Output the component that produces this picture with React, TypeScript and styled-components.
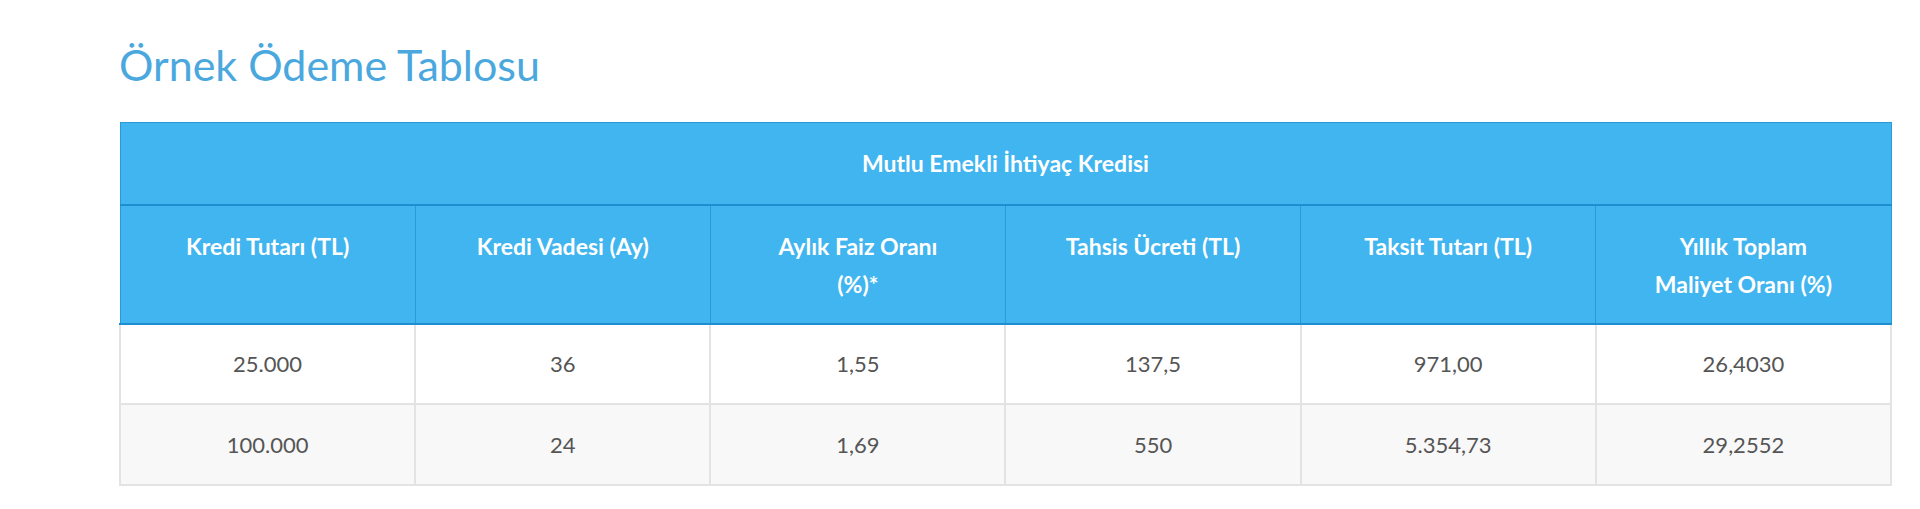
import React from "react";
import styled, { createGlobalStyle } from "styled-components";

const GlobalStyle = createGlobalStyle`
    html, body {
        margin: 0;
        padding: 0;
        background: #ffffff;
    }
`;

const Page = styled.div`
    padding: 40px 28px 0 119px;
    font-family: Lato, "Open Sans", sans-serif;
`;

const Title = styled.h2`
    margin: 0 0 32px 0;
    font-size: 43px;
    font-weight: 400;
    line-height: 50px;
    color: #4aa8de;
`;

const Table = styled.table`
    width: 100%;
    border-collapse: collapse;
    table-layout: fixed;
`;

const HeadCell = styled.th<{ $height: number }>`
    height: ${props => props.$height}px;
    padding: 21px 12px 0 12px;
    box-sizing: border-box;
    vertical-align: ${props => (props.$height > 90 ? "top" : "middle")};
    background: #41b5ef;
    color: #ffffff;
    font-size: 23px;
    font-weight: 700;
    line-height: 38px;
    text-align: center;
    border: 1px solid #2a9ad6;
    border-bottom-width: 2px;
    border-bottom-color: #1f8ed0;
`;

const TitleCell = styled(HeadCell)`
    padding: 0 12px;
`;

const Row = styled.tr<{ $striped?: boolean }>`
    background: ${props => (props.$striped ? "#f8f8f8" : "#ffffff")};
`;

const Cell = styled.td<{ $height: number }>`
    height: ${props => props.$height}px;
    box-sizing: border-box;
    padding: 0 12px;
    border: 2px solid #e3e3e3;
    border-top-width: 1px;
    color: #555555;
    font-size: 22px;
    text-align: center;
    vertical-align: middle;
`;

const columns: React.ReactNode[] = [
    "Kredi Tutarı (TL)",
    "Kredi Vadesi (Ay)",
    <>Aylık Faiz Oranı<br />(%)*</>,
    "Tahsis Ücreti (TL)",
    "Taksit Tutarı (TL)",
    <>Yıllık Toplam<br />Maliyet Oranı (%)</>,
];

const rows = [
    ["25.000", "36", "1,55", "137,5", "971,00", "26,4030"],
    ["100.000", "24", "1,69", "550", "5.354,73", "29,2552"],
];

export default function App() {
    return (
        <>
            <GlobalStyle />
            <Page>
                <Title>Örnek Ödeme Tablosu</Title>
                <Table>
                    <thead>
                        <tr>
                            <TitleCell $height={82} colSpan={6}>
                                Mutlu Emekli İhtiyaç Kredisi
                            </TitleCell>
                        </tr>
                        <tr>
                            {columns.map((c, i) => (
                                <HeadCell key={i} $height={119}>{c}</HeadCell>
                            ))}
                        </tr>
                    </thead>
                    <tbody>
                        {rows.map((r, i) => (
                            <Row key={i} $striped={i % 2 === 1}>
                                {r.map((v, j) => (
                                    <Cell key={j} $height={i === 0 ? 80 : 81}>{v}</Cell>
                                ))}
                            </Row>
                        ))}
                    </tbody>
                </Table>
            </Page>
        </>
    );
}
